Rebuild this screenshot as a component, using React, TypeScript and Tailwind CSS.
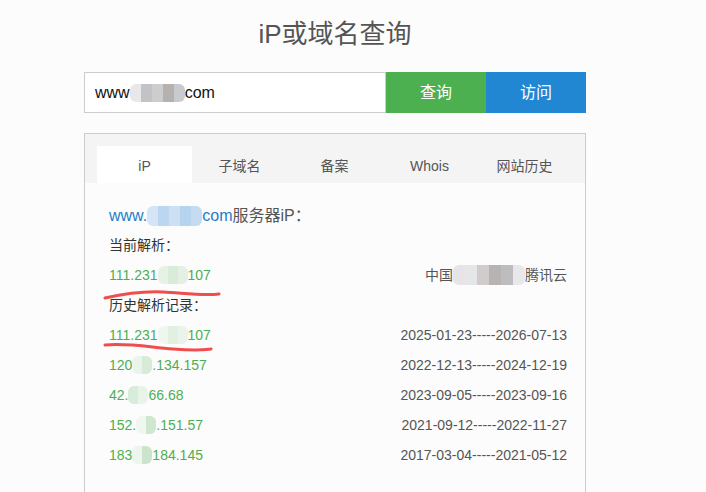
import React from "react";

const font = { fontFamily: '"Liberation Sans", Arial, "Noto Sans CJK SC", sans-serif' };

function Mosaic({ cells, h = 18, w = 11 }: { cells: string[]; h?: number; w?: number }) {
  return (
    <span className="inline-flex align-middle rounded-md overflow-hidden blur-[0.6px]" style={{ height: h }}>
      {cells.map((c, i) => (
        <span key={i} style={{ width: w, background: c }} />
      ))}
    </span>
  );
}

const history = [
  { a: "111.231", m: ["#eef6ee", "#e2f0e2", "#eaf4ea"], b: "107", d: "2025-01-23-----2026-07-13" },
  { a: "120", m: ["#eaf4ea", "#d7ebd7"], b: ".134.157", d: "2022-12-13-----2024-12-19" },
  { a: "42.", m: ["#d9ecd9", "#e9f4e9"], b: "66.68", d: "2023-09-05-----2023-09-16" },
  { a: "152.", m: ["#f0f7f0", "#cfe6cf"], b: ".151.57", d: "2021-09-12-----2022-11-27" },
  { a: "183", m: ["#edf6ed", "#cbe4cb"], b: "184.145", d: "2017-03-04-----2021-05-12" },
];

export default function App() {
  return (
    <div className="h-screen overflow-hidden bg-[#fcfcfc] text-[#333]" style={font}>
      <div className="ml-[84px] w-[502px]">
        <h1 className="text-[26px] leading-[34px] pt-[17px] text-center text-[#555]">iP或域名查询</h1>

        <div className="flex mt-[21px] h-[41px]">
          <div className="flex-1 border border-[#cccccc] bg-white flex items-center pl-[10px] text-[16px] text-[#111]">
            www
            <Mosaic cells={["#e8e8ea", "#c3c3c7", "#cdcdce", "#b4b1af", "#c9cacd"]} h={18} />
            com
          </div>
          <button className="w-[100px] bg-[#4caf50] text-white text-[16px]">查询</button>
          <button className="w-[100px] bg-[#2187d3] text-white text-[16px]">访问</button>
        </div>

        <div className="mt-[20px] border border-[#cccccc] bg-[#fcfcfc] h-[400px]">
          <div className="bg-[#f4f4f4] pt-[12px] pl-[12px] flex text-[14px] text-[#555]">
            <div className="w-[95px] h-[37px] pt-[4px] bg-white flex items-center justify-center">iP</div>
            <div className="w-[95px] h-[37px] pt-[4px] flex items-center justify-center">子域名</div>
            <div className="w-[95px] h-[37px] pt-[4px] flex items-center justify-center">备案</div>
            <div className="w-[95px] h-[37px] pt-[4px] flex items-center justify-center">Whois</div>
            <div className="w-[95px] h-[37px] pt-[4px] flex items-center justify-center">网站历史</div>
          </div>

          <div className="relative pl-[24px] pr-[18px] pt-[19px] text-[14px]">
            <div className="h-[28px] flex items-center text-[16px] text-[#1e7ecb]">
              www.
              <Mosaic cells={["#d5e5f5", "#bcd6ef", "#cde0f3", "#b7d4ee", "#c4dbf1"]} h={20} />
              com<span className="text-[#555]">服务器iP：</span>
            </div>
            <div className="h-[30px] flex items-center text-[#333]">当前解析：</div>
            <div className="h-[30px] flex items-center justify-between">
              <span className="text-[#4caf50] flex items-center">
                111.231
                <Mosaic cells={["#e6f2e6", "#d9ecd9", "#e3f0e3"]} h={18} w={10} />
                107
              </span>
              <span className="text-[#555] flex items-center">
                中国
                <Mosaic cells={["#e6e4e6", "#e4e6e8", "#cfcccb", "#b8b3b3", "#bdbdc0", "#e8e8ea"]} h={20} w={12} />
                腾讯云
              </span>
            </div>
            <div className="h-[30px] flex items-center text-[#333]">历史解析记录：</div>
            {history.map((r, i) => (
              <div key={i} className="h-[30px] flex items-center justify-between">
                <span className="text-[#4caf50] flex items-center">
                  {r.a}
                  <Mosaic cells={r.m} h={18} w={10} />
                  {r.b}
                </span>
                <span className="text-[#555]">{r.d}</span>
              </div>
            ))}

            <svg className="absolute left-[18px] top-[105px]" width="125" height="14" viewBox="0 0 125 14">
              <path d="M2 10 C 20 6, 40 3, 60 4 S 100 8, 116 6" stroke="#f04e4e" strokeWidth="3" fill="none" strokeLinecap="round" />
            </svg>
            <svg className="absolute left-[18px] top-[158px]" width="125" height="14" viewBox="0 0 125 14">
              <path d="M2 4 C 25 2, 45 6, 70 8 S 100 9, 108 8" stroke="#f04e4e" strokeWidth="3" fill="none" strokeLinecap="round" />
            </svg>
          </div>
        </div>
      </div>
    </div>
  );
}
